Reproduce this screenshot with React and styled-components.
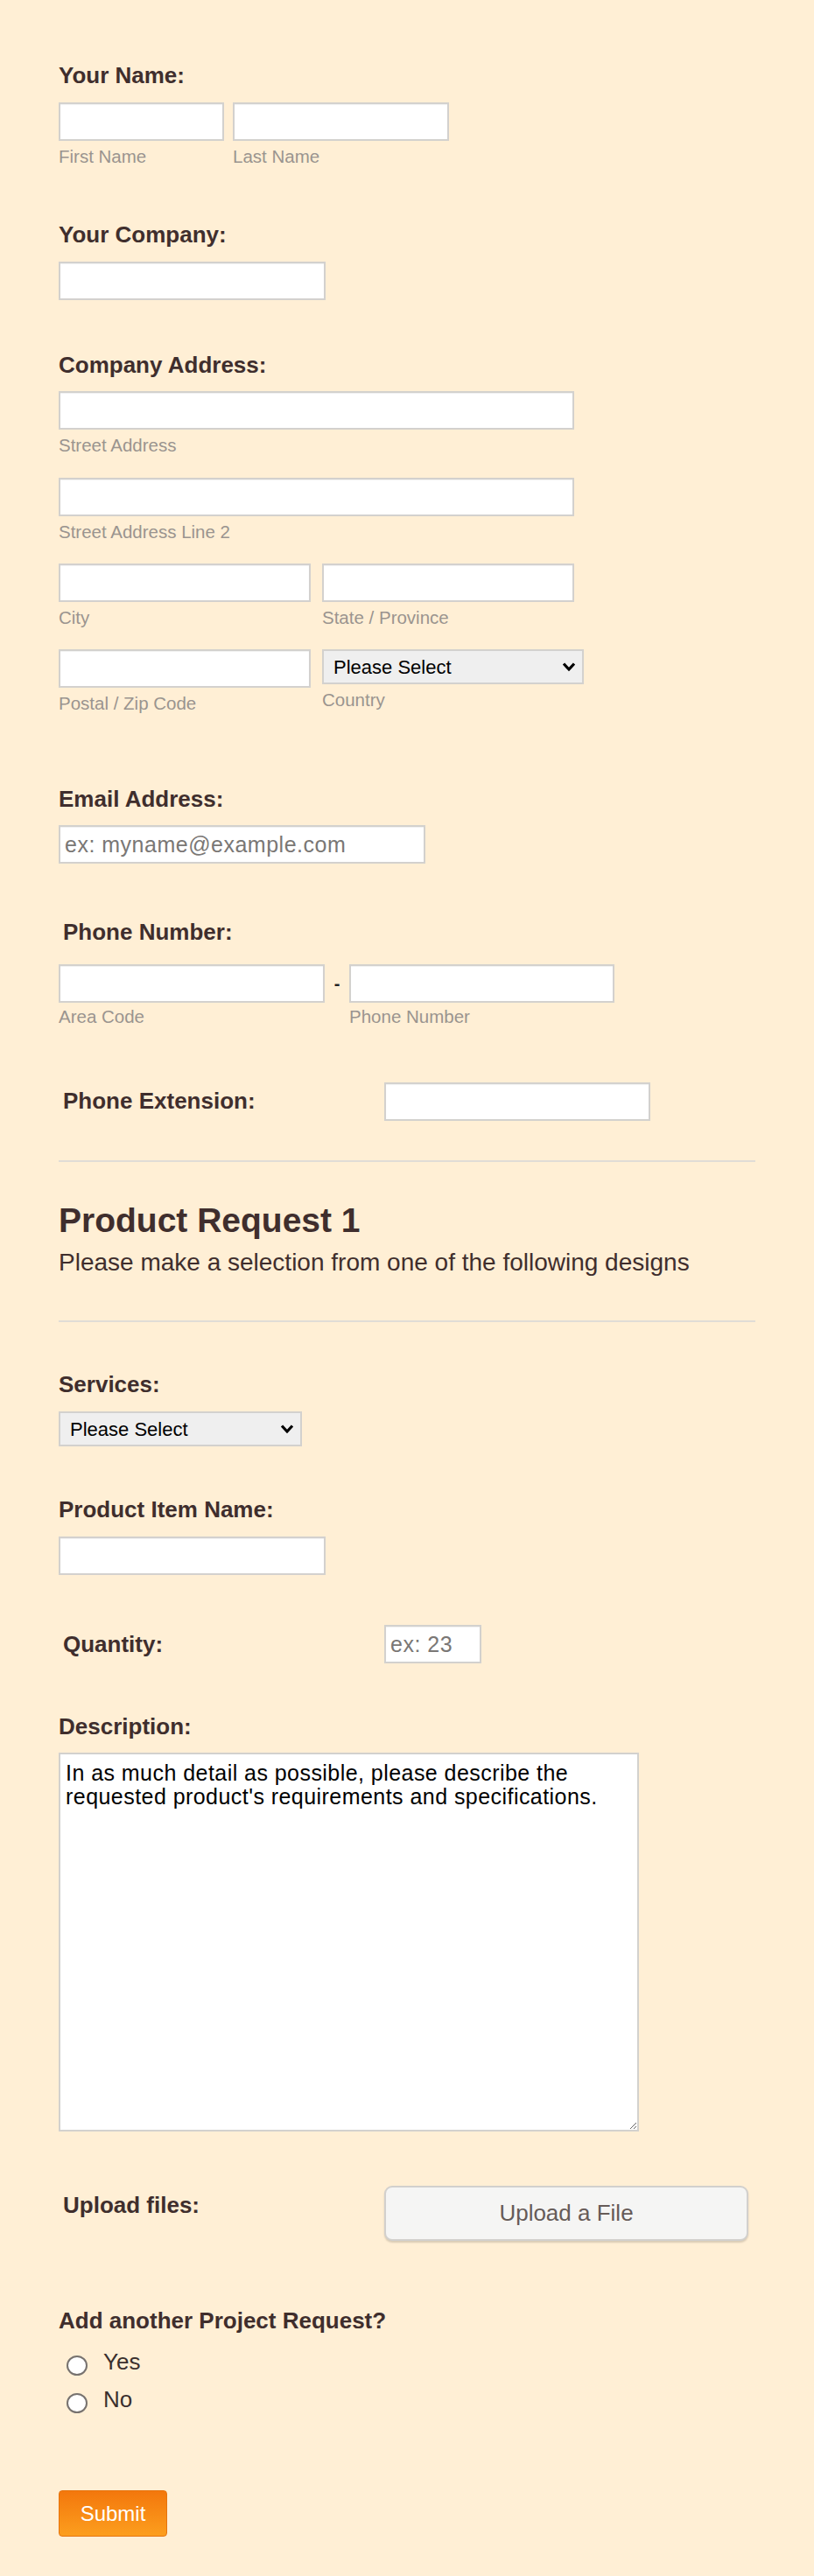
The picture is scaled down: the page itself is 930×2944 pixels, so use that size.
import React from "react";
import styled, { createGlobalStyle } from "styled-components";

const Global = createGlobalStyle`
  html, body { margin: 0; padding: 0; background: #ffefd5; }
  * { box-sizing: border-box; }
`;

const Page = styled.form`
  display: flex;
  flex-direction: column;
  align-items: flex-start;
  padding: 71px 0 43px 67px;
  font-family: "Liberation Sans", Arial, sans-serif;
  color: #3f2e2d;
  background: #ffefd5;
  min-height: 2944px;
`;

const Field = styled.div`
  display: flex;
  flex-direction: column;
  align-items: flex-start;
  margin-top: ${(p) => p.$mt || 0}px;
`;

const Label = styled.div`
  font-size: 26px;
  line-height: 30px;
  font-weight: 700;
  color: #3f2e2d;
  padding-left: ${(p) => p.$indent || 0}px;
  padding-top: ${(p) => p.$pt || 0}px;
`;

const Row = styled.div`
  display: flex;
  align-items: flex-start;
  gap: ${(p) => p.$gap || 0}px;
  margin-top: ${(p) => p.$mt || 0}px;
`;

const Col = styled.div`
  display: flex;
  flex-direction: column;
`;

const SubLabel = styled.div`
  margin-top: ${(p) => (p.$mt === undefined ? 6 : p.$mt)}px;
  font-size: 20.5px;
  line-height: 24px;
  color: #9a948f;
`;

const TextInput = styled.input`
  width: ${(p) => p.$w}px;
  height: 44px;
  background: #fff;
  border: 2px solid #d3d1ce;
  box-shadow: inset 0 1px 1px rgba(0, 0, 0, 0.06);
  border-radius: 0;
  padding: 0 5px;
  font-family: "Liberation Sans", Arial, sans-serif;
  font-size: 25px;
  letter-spacing: 0.5px;
  color: #000;
  outline: none;
  &::placeholder { color: #7a7775; }
`;

const SelectWrap = styled.div`
  position: relative;
  width: ${(p) => p.$w}px;
  height: 40px;
`;

const Select = styled.select`
  appearance: none;
  -webkit-appearance: none;
  width: 100%;
  height: 100%;
  background: #efefef;
  border: 2px solid #d3d1ce;
  border-radius: 0;
  padding: 0 30px 0 11px;
  font-family: "Liberation Sans", Arial, sans-serif;
  font-size: 22px;
  color: #000;
  outline: none;
`;

const Chevron = styled.svg`
  position: absolute;
  right: 9px;
  top: 50%;
  transform: translateY(-50%);
  pointer-events: none;
`;

const Dash = styled.span`
  width: 28px;
  text-align: center;
  font-size: 20px;
  line-height: 44px;
  font-weight: 700;
  color: #222;
`;

const InlineRow = styled.div`
  display: flex;
  align-items: flex-start;
  margin-top: ${(p) => p.$mt || 0}px;
`;

const LabelCol = styled.div`
  width: 372px;
`;

const Divider = styled.hr`
  width: 796px;
  height: 0;
  margin: ${(p) => p.$mt}px 0 0 0;
  border: none;
  border-top: 2px solid #e0dcd6;
`;

const Heading = styled.h1`
  margin: 45px 0 0 0;
  font-size: 39px;
  line-height: 44px;
  font-weight: 700;
  color: #3f2e2d;
`;

const SubHeading = styled.p`
  margin: 10px 0 0 0;
  font-size: 28px;
  line-height: 32px;
  color: #3f2e2d;
`;

const TextArea = styled.textarea`
  margin-top: 15px;
  width: 663px;
  height: 433px;
  background: #fff;
  border: 2px solid #d3d1ce;
  border-radius: 0;
  padding: 8px 6px;
  font-family: "Liberation Sans", Arial, sans-serif;
  font-size: 25px;
  letter-spacing: 0.45px;
  line-height: 27px;
  color: #000;
  outline: none;
`;

const UploadButton = styled.button`
  width: 416px;
  height: 63px;
  background: #f5f5f4;
  border: 2px solid #d2d0cd;
  border-radius: 9px;
  box-shadow: 0 2px 2px rgba(0, 0, 0, 0.15);
  font-family: "Liberation Sans", Arial, sans-serif;
  font-size: 26px;
  color: #665b58;
  cursor: pointer;
`;

const RadioList = styled.div`
  display: flex;
  flex-direction: column;
  gap: 13px;
  margin-top: 17px;
`;

const RadioItem = styled.label`
  display: flex;
  align-items: flex-start;
  height: 30px;
  font-size: 26px;
  line-height: 30px;
  color: #3a2f2e;
`;

const RadioCircle = styled.input`
  appearance: none;
  -webkit-appearance: none;
  width: 24px;
  height: 23px;
  margin: 8px 18px 0 9px;
  border: 2px solid #77726f;
  border-radius: 50%;
  background: #fff;
`;

const SubmitButton = styled.button`
  margin-top: 89px;
  width: 124px;
  height: 53px;
  background: linear-gradient(#f3770c, #fc9e1e);
  border: 1px solid #e6740e;
  border-radius: 4px;
  font-family: "Liberation Sans", Arial, sans-serif;
  font-size: 24px;
  color: #fff;
  cursor: pointer;
`;

const ChevronIcon = () => (
  <Chevron width="16" height="11" viewBox="0 0 16 11">
    <polyline points="2,2 8,8.5 14,2" fill="none" stroke="#000" strokeWidth="3.2" strokeLinejoin="miter" />
  </Chevron>
);

const Dropdown = ({ w }) => (
  <SelectWrap $w={w}>
    <Select defaultValue="">
      <option value="">Please Select</option>
    </Select>
    <ChevronIcon />
  </SelectWrap>
);

export default function App() {
  return (
    <>
      <Global />
      <Page onSubmit={(e) => e.preventDefault()}>
        <Field>
          <Label>Your Name:</Label>
          <Row $mt={16} $gap={10}>
            <Col>
              <TextInput $w={189} />
              <SubLabel>First Name</SubLabel>
            </Col>
            <Col>
              <TextInput $w={247} />
              <SubLabel>Last Name</SubLabel>
            </Col>
          </Row>
        </Field>

        <Field $mt={62}>
          <Label>Your Company:</Label>
          <Row $mt={16}>
            <TextInput $w={305} />
          </Row>
        </Field>

        <Field $mt={59}>
          <Label>Company Address:</Label>
          <Row $mt={15}>
            <Col>
              <TextInput $w={589} />
              <SubLabel>Street Address</SubLabel>
            </Col>
          </Row>
          <Row $mt={25}>
            <Col>
              <TextInput $w={589} />
              <SubLabel>Street Address Line 2</SubLabel>
            </Col>
          </Row>
          <Row $mt={24} $gap={13}>
            <Col>
              <TextInput $w={288} />
              <SubLabel>City</SubLabel>
            </Col>
            <Col>
              <TextInput $w={288} />
              <SubLabel>State / Province</SubLabel>
            </Col>
          </Row>
          <Row $mt={24} $gap={13}>
            <Col>
              <TextInput $w={288} />
              <SubLabel>Postal / Zip Code</SubLabel>
            </Col>
            <Col>
              <Dropdown w={299} />
              <SubLabel>Country</SubLabel>
            </Col>
          </Row>
        </Field>

        <Field $mt={82}>
          <Label>Email Address:</Label>
          <Row $mt={15}>
            <TextInput $w={419} placeholder="ex: myname@example.com" />
          </Row>
        </Field>

        <Field $mt={63}>
          <Label $indent={5}>Phone Number:</Label>
          <Row $mt={22}>
            <Col>
              <TextInput $w={304} />
              <SubLabel $mt={4}>Area Code</SubLabel>
            </Col>
            <Dash>-</Dash>
            <Col>
              <TextInput $w={303} />
              <SubLabel $mt={4}>Phone Number</SubLabel>
            </Col>
          </Row>
        </Field>

        <InlineRow $mt={63}>
          <LabelCol>
            <Label $indent={5} $pt={6}>Phone Extension:</Label>
          </LabelCol>
          <TextInput $w={304} />
        </InlineRow>

        <Divider $mt={45} />

        <Heading>Product Request 1</Heading>
        <SubHeading>Please make a selection from one of the following designs</SubHeading>

        <Divider $mt={50} />

        <Field $mt={56}>
          <Label>Services:</Label>
          <Row $mt={16}>
            <Dropdown w={278} />
          </Row>
        </Field>

        <Field $mt={57}>
          <Label>Product Item Name:</Label>
          <Row $mt={16}>
            <TextInput $w={305} />
          </Row>
        </Field>

        <InlineRow $mt={57}>
          <LabelCol>
            <Label $indent={5} $pt={7}>Quantity:</Label>
          </LabelCol>
          <TextInput $w={111} placeholder="ex: 23" />
        </InlineRow>

        <Field $mt={57}>
          <Label>Description:</Label>
          <TextArea defaultValue="In as much detail as possible, please describe the requested product's requirements and specifications." />
        </Field>

        <InlineRow $mt={62}>
          <LabelCol>
            <Label $indent={5} $pt={7}>Upload files:</Label>
          </LabelCol>
          <UploadButton type="button">Upload a File</UploadButton>
        </InlineRow>

        <Field $mt={76}>
          <Label>Add another Project Request?</Label>
          <RadioList>
            <RadioItem>
              <RadioCircle type="radio" name="another" />
              Yes
            </RadioItem>
            <RadioItem>
              <RadioCircle type="radio" name="another" />
              No
            </RadioItem>
          </RadioList>
        </Field>

        <SubmitButton type="submit">Submit</SubmitButton>
      </Page>
    </>
  );
}
